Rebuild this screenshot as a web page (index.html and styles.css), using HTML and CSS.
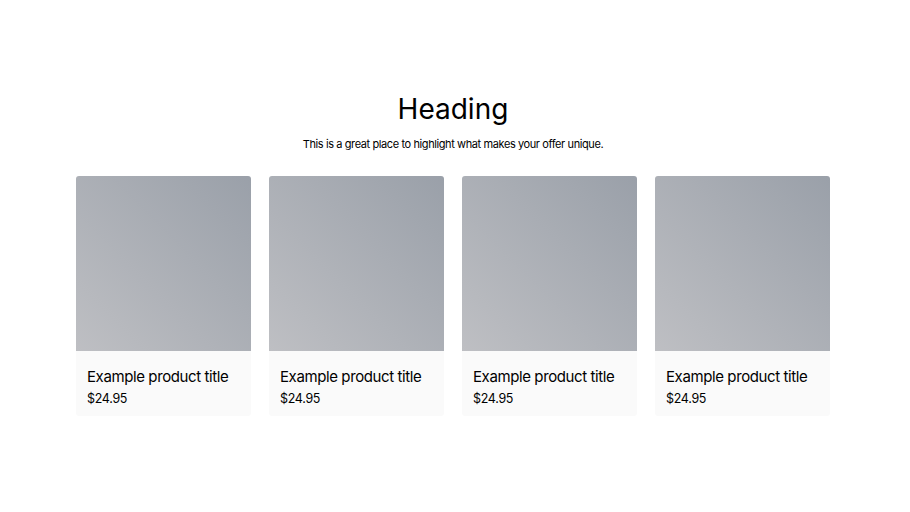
FILE: index.html
```html
<!DOCTYPE html>
<html lang="en">
<head>
<meta charset="utf-8">
<title>Products</title>
<link rel="stylesheet" href="styles.css">
</head>
<body>
<section class="section">
  <header class="intro">
    <h1 class="heading">Heading</h1>
    <p class="subtitle">This is a great place to highlight what makes your offer unique.</p>
  </header>
  <div class="grid">
    <article class="card">
      <div class="card-image"></div>
      <div class="card-body">
        <h2 class="card-title">Example product title</h2>
        <p class="card-price">$24.95</p>
      </div>
    </article>
    <article class="card">
      <div class="card-image"></div>
      <div class="card-body">
        <h2 class="card-title">Example product title</h2>
        <p class="card-price">$24.95</p>
      </div>
    </article>
    <article class="card">
      <div class="card-image"></div>
      <div class="card-body">
        <h2 class="card-title">Example product title</h2>
        <p class="card-price">$24.95</p>
      </div>
    </article>
    <article class="card">
      <div class="card-image"></div>
      <div class="card-body">
        <h2 class="card-title">Example product title</h2>
        <p class="card-price">$24.95</p>
      </div>
    </article>
  </div>
</section>
</body>
</html>
```
FILE: styles.css
```css
* { box-sizing: border-box; }
html, body { margin: 0; padding: 0; background: #ffffff; }
body {
  font-family: Inter, "Noto Sans", "Liberation Sans", sans-serif;
  color: #000000;
}
.section {
  width: 100%;
  padding: 92px 80px 0 76px;
  display: flex;
  flex-direction: column;
  align-items: center;
}
.intro {
  display: flex;
  flex-direction: column;
  align-items: center;
  margin-bottom: 25px;
}
.heading {
  margin: 0;
  font-size: 28px;
  font-weight: 400;
  line-height: 34px;
}
.subtitle {
  margin: 11px 0 0;
  font-size: 11px;
  line-height: 14px;
  letter-spacing: -0.4px;
}
.grid {
  width: 100%;
  display: grid;
  grid-template-columns: repeat(4, 1fr);
  gap: 18px;
}
.card {
  border-radius: 3px;
  overflow: hidden;
  background: #fafafa;
}
.card-image {
  height: 175px;
  background: linear-gradient(45deg, #bebfc3 0%, #9aa0a9 100%);
}
.card-body {
  padding: 16px 11px 9px;
}
.card-title {
  margin: 0;
  font-size: 15px;
  font-weight: 400;
  line-height: 20px;
  letter-spacing: -0.4px;
}
.card-price {
  margin: 4px 0 0;
  font-size: 12.5px;
  line-height: 16px;
  letter-spacing: -0.3px;
}
```
